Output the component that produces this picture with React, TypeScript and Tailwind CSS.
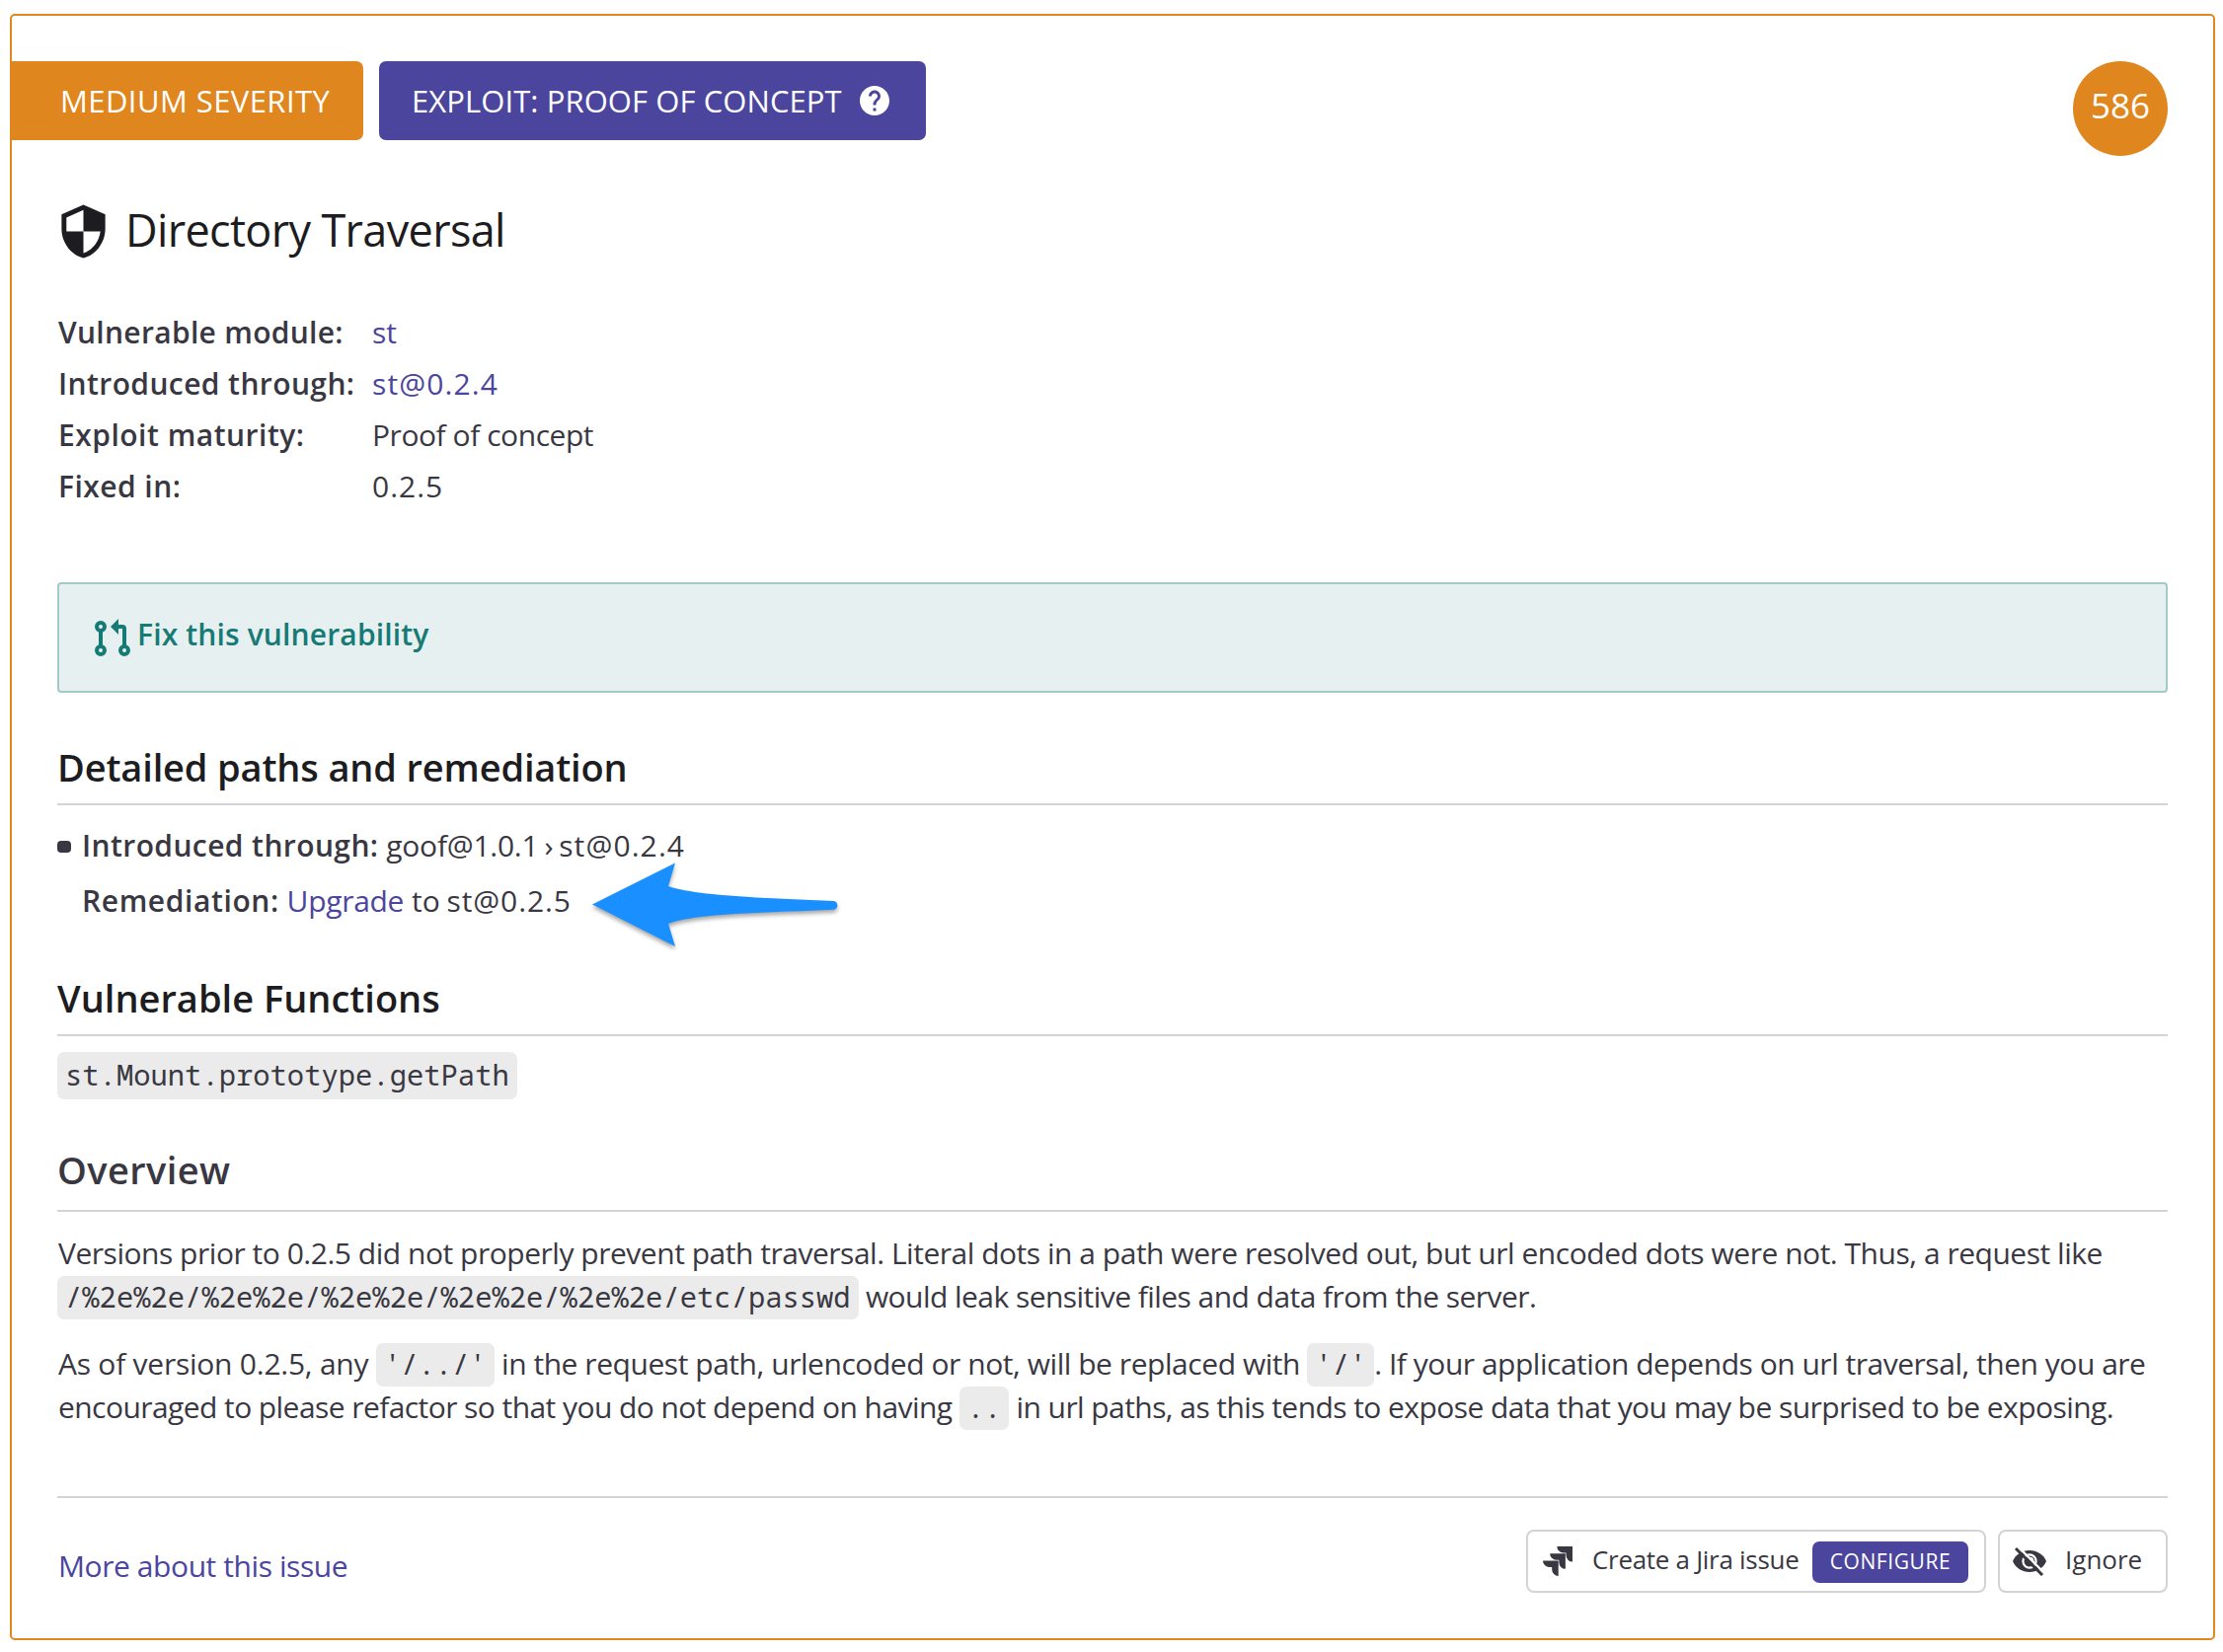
import type { ReactNode } from "react";
import { MdHelp, MdSecurity } from "react-icons/md";

function PullRequestIcon() {
  return (
    <svg width="36" height="38" viewBox="0 0 36 38" fill="none" stroke="currentColor" strokeWidth="4">
      <circle cx="6" cy="8" r="4" />
      <circle cx="6" cy="32" r="4" />
      <circle cx="30" cy="32" r="4" />
      <path d="M6 12v16M30 28V10a2 2 0 0 0-2-2h-6" />
      <path d="M24 0v16l-8-8z" fill="currentColor" stroke="none" />
    </svg>
  );
}

function JiraIcon() {
  return (
    <svg width="30" height="30" viewBox="0 0 24 24" fill="currentColor">
      <path d="M12.575 11.513H0a5.218 5.218 0 0 0 5.232 5.215h2.13v2.057A5.215 5.215 0 0 0 12.575 24z" />
      <path d="M18.295 5.757H5.736a5.215 5.215 0 0 0 5.215 5.214h2.129v2.058a5.218 5.218 0 0 0 5.215 5.214z" />
      <path d="M24 0H11.455a5.215 5.215 0 0 0 5.215 5.215h2.129v2.057A5.215 5.215 0 0 0 24 12.483z" />
    </svg>
  );
}

function EyeOffIcon() {
  return (
    <svg width="34" height="30" viewBox="0 0 34 30" fill="none">
      <path d="M0 15C3 8 9.500 4 17 4s14 4 17 11c-3 7-9.500 11-17 11S3 22 0 15z" fill="#393842" />
      <circle cx="17" cy="15" r="6.600" stroke="#fff" strokeWidth="2.200" />
      <path d="M17.500 11.800a3.200 3.200 0 0 1 3 3.200" stroke="#fff" strokeWidth="2" />
      <path d="M5 0 32.500 27.500" stroke="#fff" strokeWidth="2.400" />
      <path d="M3 2 30 29" stroke="#393842" strokeWidth="3" />
    </svg>
  );
}

function ArrowMark() {
  return (
    <svg
      className="absolute top-[39px] left-[538px] overflow-visible drop-shadow-[0_3px_2px_rgba(0,0,0,0.35)]"
      width="250"
      height="90"
      viewBox="0 0 250 90"
      fill="#1a8fff"
    >
      <path d="M4 48.500 88 6.500 81 30C110 40 180 42 248 45a4.300 4.300 0 0 1 0 8.800C180 57 110 57 81 68l7 23z" />
    </svg>
  );
}

function Code({ children }: { children: ReactNode }) {
  return (
    <code className="rounded-[7px] bg-[#ebebeb] px-2 pt-px pb-1 font-['Noto_Sans_Mono','DejaVu_Sans_Mono',monospace] text-[28.83px] tracking-normal">
      {children}
    </code>
  );
}

function Heading({ className, children }: { className: string; children: ReactNode }) {
  return (
    <h2 className={`border-b-2 border-[#d3d3d8] text-[38px] leading-[50px] font-semibold whitespace-nowrap ${className}`}>
      {children}
    </h2>
  );
}

export default function App() {
  return (
    <div className="relative h-[1674px] w-[2252px] overflow-hidden bg-white pt-[14px] pl-[10px] font-['Open_Sans',sans-serif] text-[30px] text-[#393842]">
      <main className="relative h-[1648px] w-[2234px] rounded-[5px] border-2 border-[#e0871f]">
        <header className="-ml-0.5 flex items-start pt-[46px] pr-[46px] text-[31px] whitespace-nowrap text-white">
          <div className="flex h-20 w-[358px] items-center rounded-r-[7px] bg-[#df861e] pt-px pl-[51px] tracking-[0.42px]">
            MEDIUM SEVERITY
          </div>
          <div className="ml-4 flex h-20 w-[554px] items-center rounded-[7px] bg-[#4b459e] pl-[33px] tracking-[0.08px]">
            <span className="w-[451px] pt-px">EXPLOIT: PROOF OF CONCEPT</span>
            <MdHelp className="size-9" />
          </div>
          <div className="ml-auto flex size-24 items-center justify-center rounded-full bg-[#df861e] pb-[5px] text-[35px]">
            586
          </div>
        </header>

        <div className="pr-[46px] pl-[46px]">
          <h1 className="mt-[44px] flex h-[60px] items-center text-[45px] leading-[60px] tracking-[-0.65px] whitespace-nowrap text-[#1c1c21]">
            <MdSecurity className="mt-1 -ml-[3px] size-[59px]" />
            <span className="mt-px ml-[13px]">Directory Traversal</span>
          </h1>

          <dl className="mt-[49px] grid grid-cols-[319px_1fr] leading-[52px] whitespace-nowrap">
            <dt className="pl-px font-semibold tracking-[0.3px]">Vulnerable module:</dt>
            <dd className="tracking-[0px] text-[#4b459e]">st</dd>
            <dt className="pl-px font-semibold tracking-[0.4px]">Introduced through:</dt>
            <dd className="tracking-[1.1px] text-[#4b459e]">st@0.2.4</dd>
            <dt className="pl-px font-semibold tracking-[0.5px]">Exploit maturity:</dt>
            <dd className="tracking-[-0.45px]">Proof of concept</dd>
            <dt className="pl-px font-semibold tracking-[0.45px]">Fixed in:</dt>
            <dd className="tracking-[1px]">0.2.5</dd>
          </dl>

          <div className="mt-[71px] flex h-28 items-center rounded-[4px] border-2 border-[#a2cac8] bg-[#e7f0f1] pl-9 font-semibold text-[#167a75]">
            <PullRequestIcon />
            <span className="mb-[7px] ml-[7px] tracking-[0.15px]">Fix this vulnerability</span>
          </div>

          <Heading className="mt-[50px] pb-3 tracking-[-0.15px] text-[#1c1c21]">Detailed paths and remediation</Heading>
          <div className="relative mt-[13px] mb-[45px] pl-[25px] leading-[56px] whitespace-nowrap">
            <span className="absolute top-[23px] left-0 h-3 w-[14px] rounded-[4px] bg-[#393842]" />
            <div>
              <b className="font-semibold tracking-[0.4px]">Introduced through:</b>{" "}
              <span className="tracking-[-0.25px] [word-spacing:-1.5px]">goof@1.0.1 › </span>
              <span className="tracking-[1.1px]">st@0.2.4</span>
            </div>
            <div>
              <b className="font-semibold tracking-[0.6px]">Remediation:</b>{" "}
              <a className="tracking-[-0.3px] text-[#4b459e]">Upgrade</a>{" "}
              <span className="[word-spacing:-1px]">to </span>
              <span className="tracking-[0.9px]">st@0.2.5</span>
            </div>
            <ArrowMark />
          </div>

          <Heading className="pb-3 text-[#1c1c21]">Vulnerable Functions</Heading>
          <code className="mt-4 flex h-12 w-[466px] items-center rounded-[7px] bg-[#ebebeb] px-2 pb-0.5 font-['Noto_Sans_Mono','DejaVu_Sans_Mono',monospace] text-[28.83px]">
            st.Mount.prototype.getPath
          </code>

          <Heading className="mt-[46px] pb-4 tracking-[0.4px]">Overview</Heading>
          <div className="mt-5 space-y-6 pl-px leading-[44px] whitespace-nowrap">
            <p>
              <span className="tracking-[-0.475px]">
                Versions prior to 0.2.5 did not properly prevent path traversal. Literal dots in a path were resolved out, but url encoded dots were not. Thus, a request like
              </span>
              <br />
              <span className="-ml-px tracking-[-0.55px]">
                <Code>/%2e%2e/%2e%2e/%2e%2e/%2e%2e/%2e%2e/etc/passwd</Code> would leak sensitive files and data from the server.
              </span>
            </p>
            <p>
              <span className="tracking-[-0.24px]">As of version 0.2.5, any </span>
              <Code>'/../'</Code>
              <span className="tracking-[-0.45px]"> in the request path, urlencoded or not, will be replaced with </span>
              <Code>'/'</Code>
              <span className="tracking-[-0.48px]">. If your application depends on url traversal, then you are</span>
              <br />
              <span className="tracking-[-0.57px]">
                encouraged to please refactor so that you do not depend on having <Code>..</Code> in url paths, as this tends to expose data that you may be surprised to be exposing.
              </span>
            </p>
          </div>

          <footer className="mt-[68px] flex items-start border-t-2 border-[#d3d3d8] pt-8 whitespace-nowrap">
            <a className="mt-[15px] pl-px leading-[44px] tracking-[-0.42px] text-[#4b459e]">More about this issue</a>
            <button className="ml-auto flex h-16 w-[466px] items-center rounded-[8px] border-2 border-[#d3d3d8] pl-[15px] text-[26px]">
              <JiraIcon />
              <span className="mb-1 ml-5 w-[223px] text-left tracking-[-0.3px]">Create a Jira issue</span>
              <span className="mt-0.5 flex h-[42px] w-[158px] items-center justify-center rounded-[7px] bg-[#4b459e] pb-px text-[21px] tracking-[0.6px] text-white">
                CONFIGURE
              </span>
            </button>
            <button className="ml-3 flex h-16 w-[172px] items-center rounded-[8px] border-2 border-[#d3d3d8] pl-[13px] text-[26px]">
              <EyeOffIcon />
              <span className="mb-1 ml-[19px]">Ignore</span>
            </button>
          </footer>
        </div>
      </main>
    </div>
  );
}
